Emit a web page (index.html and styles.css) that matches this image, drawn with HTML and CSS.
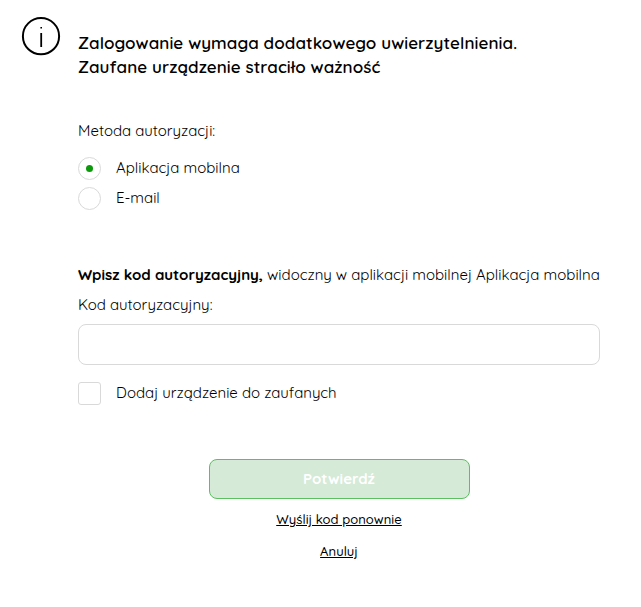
FILE: index.html
```
<!DOCTYPE html>
<html lang="pl">
<head>
<meta charset="utf-8">
<title>Autoryzacja</title>
<link rel="stylesheet" href="styles.css">
</head>
<body>
<main class="dialog">
  <svg class="info-icon" viewBox="0 0 40 40" fill="none" stroke="#000" aria-hidden="true">
    <circle cx="20" cy="20.2" r="18.1" stroke-width="2"/>
    <path d="M20.2 17v14" stroke-width="1.8"/>
    <path d="M20.2 11v1.6" stroke-width="1.6"/>
  </svg>
  <form class="content">
    <h1 class="title">Zalogowanie wymaga dodatkowego uwierzytelnienia.<br>Zaufane urządzenie straciło ważność</h1>
    <fieldset class="methods">
      <legend class="legend">Metoda autoryzacji:</legend>
      <label class="option"><input class="radio" type="radio" name="method" checked><span>Aplikacja mobilna</span></label>
      <label class="option"><input class="radio" type="radio" name="method"><span>E-mail</span></label>
    </fieldset>
    <p class="hint"><strong>Wpisz kod autoryzacyjny,</strong> widoczny w aplikacji mobilnej Aplikacja mobilna</p>
    <label class="code-label" for="code">Kod autoryzacyjny:</label>
    <input class="code" id="code" type="text">
    <label class="option trust"><input class="checkbox" type="checkbox"><span>Dodaj urządzenie do zaufanych</span></label>
    <div class="actions">
      <button class="confirm" type="button" disabled>Potwierdź</button>
      <a class="link resend" href="#">Wyślij kod ponownie</a>
      <a class="link cancel" href="#">Anuluj</a>
    </div>
  </form>
</main>
</body>
</html>
```
FILE: styles.css
```
* { box-sizing: border-box; }
body {
  margin: 0;
  background: #fff;
  color: #000;
  font: 400 15px/24px Quicksand, Lato, "Open Sans", sans-serif;
}
.dialog {
  display: flex;
  align-items: flex-start;
  padding: 16px 41px 0 21px;
  white-space: nowrap;
}
.info-icon { flex: none; width: 40px; height: 40px; margin-right: 17px; }
.content { width: 522px; padding-top: 15px; }
.title {
  margin: 0;
  font-size: 17px;
  line-height: 24px;
  font-weight: 600;
  letter-spacing: 0.07px;
}
.methods { margin: 40px 0 0; padding: 0; border: 0; }
.legend { padding: 0; height: 34px; }
.option {
  display: flex;
  align-items: center;
  gap: 15px;
  height: 30px;
}
.radio, .checkbox {
  appearance: none;
  flex: none;
  width: 23px;
  height: 23px;
  margin: 1px 0 0;
  border: 1px solid #d9d9d9;
  background: #fff;
}
.radio { display: grid; place-items: center; border-radius: 50%; }
.radio:checked::before {
  content: "";
  width: 7px;
  height: 7px;
  border-radius: 50%;
  background: #0a9a0a;
}
.checkbox { border-radius: 3px; }
.hint { margin: 50px 0 6px; }
.hint strong { font-weight: 700; }
.code-label { display: block; }
.code {
  display: block;
  width: 522px;
  height: 41px;
  margin: 7px 0 0;
  padding: 0 12px;
  border: 1px solid #d9d9d9;
  border-radius: 8px;
  font: inherit;
}
.trust { margin-top: 13px; }
.actions { display: flex; flex-direction: column; align-items: center; margin-top: 51px; }
.confirm {
  width: 261px;
  height: 40px;
  padding: 0;
  border: 1px solid #5cbf60;
  border-radius: 8px;
  background: #d5ead7;
  color: #fff;
  font: 700 15px/24px Quicksand, Lato, "Open Sans", sans-serif;
}
.link {
  color: #000;
  font-size: 13px;
  font-weight: 500;
  line-height: 20px;
  letter-spacing: 0.04px;
}
.resend { margin-top: 10px; }
.cancel { margin-top: 12px; }
```
